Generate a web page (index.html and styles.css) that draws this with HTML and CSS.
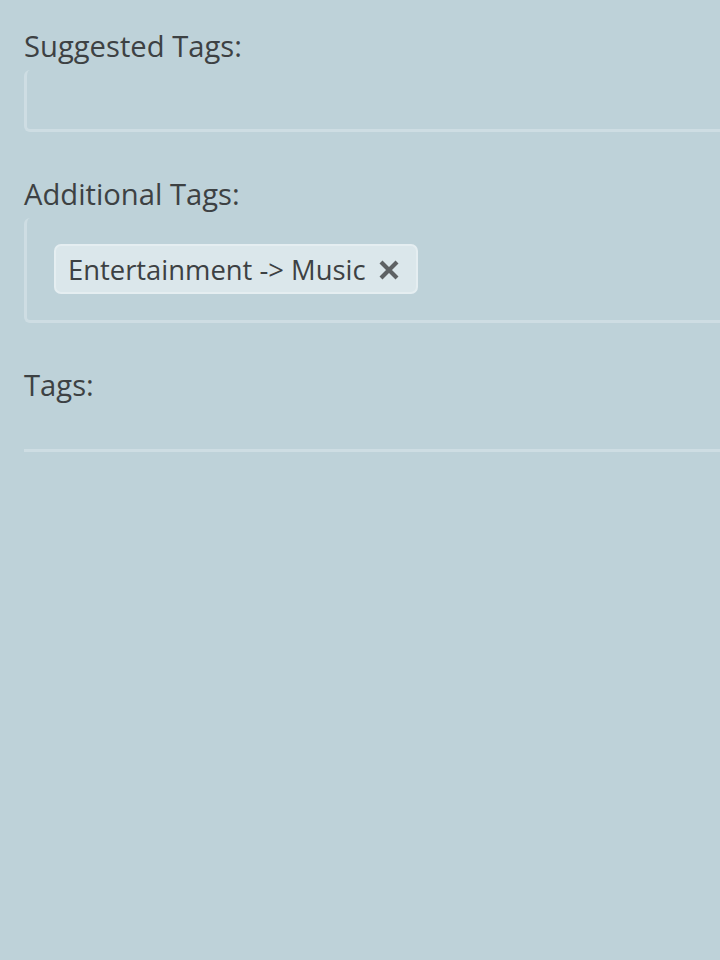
FILE: index.html
```html
<!DOCTYPE html>
<html>
<head>
<meta charset="utf-8">
<link rel="stylesheet" href="styles.css">
</head>
<body>
<div class="page">
  <section class="field">
    <div class="label">Suggested Tags:</div>
    <div class="box box-empty"></div>
  </section>
  <section class="field">
    <div class="label">Additional Tags:</div>
    <div class="box">
      <span class="chip">Entertainment -&gt; Music
        <svg class="x" viewBox="0 0 22 22" width="22" height="22"><path d="M3 3 L19 19 M19 3 L3 19" stroke="#5e6264" stroke-width="4.2" stroke-linecap="butt"/></svg>
      </span>
    </div>
  </section>
  <section class="field">
    <div class="label">Tags:</div>
    <div class="divider"></div>
  </section>
</div>
</body>
</html>
```

FILE: styles.css
```css
html, body {
  margin: 0;
  padding: 0;
  background: #bed2d9;
}
body {
  font-family: "Open Sans", "Noto Sans", sans-serif;
  color: #3d4143;
  width: 720px;
  height: 960px;
  overflow: hidden;
}
.page {
  padding: 26px 0 0 24px;
  display: flex;
  flex-direction: column;
}
.field {
  display: flex;
  flex-direction: column;
}
.label {
  font-size: 29.2px;
  line-height: 40px;
  height: 44px;
}
.box {
  border-left: 3px solid #cedde3;
  border-bottom: 3px solid #cedde3;
  border-radius: 6px 0 0 6px;
  padding: 26px 0 26px 27px;
  margin-bottom: 42px;
  display: flex;
}
.box-empty {
  height: 7px;
}
.chip {
  display: inline-flex;
  align-items: center;
  gap: 12px;
  background: #dbe7eb;
  border: 2px solid #e5eef1;
  border-radius: 7px;
  padding: 0 16px 0 12px;
  height: 46px;
  font-size: 27.4px;
}
.x {
  display: block;
  margin-top: 2px;
}
.divider {
  margin-top: 40px;
  border-bottom: 3px solid #cedde3;
}
```
